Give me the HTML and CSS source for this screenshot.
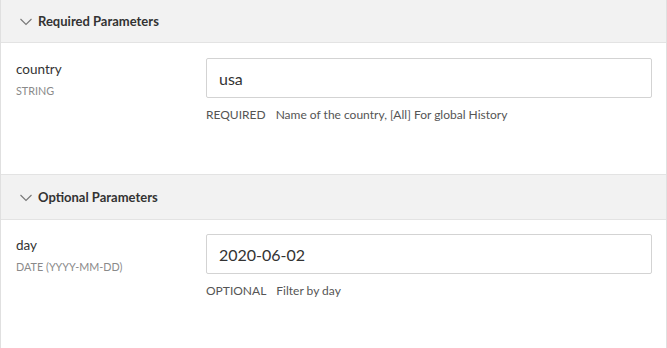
FILE: index.html
```html
<!DOCTYPE html>
<html>
<head>
<meta charset="utf-8">
<link rel="stylesheet" href="styles.css">
</head>
<body>
<div class="panel">
  <div class="section first">
    <div class="section-header">
      <svg class="chev" width="12" height="8" viewBox="0 0 12 8"><path d="M0.5 1 L6 6.5 L11.5 1" fill="none" stroke="#777" stroke-width="1.1"/></svg>
      <span>Required Parameters</span>
    </div>
    <div class="section-body">
      <div class="param">
        <div class="param-label">
          <div class="name">country</div>
          <div class="type">STRING</div>
        </div>
        <div class="param-field">
          <div class="input">usa</div>
          <div class="help"><span class="req">REQUIRED</span>Name of the country, [All] For global History</div>
        </div>
      </div>
    </div>
  </div>
  <div class="section">
    <div class="section-header">
      <svg class="chev" width="12" height="8" viewBox="0 0 12 8"><path d="M0.5 1 L6 6.5 L11.5 1" fill="none" stroke="#777" stroke-width="1.1"/></svg>
      <span>Optional Parameters</span>
    </div>
    <div class="section-body">
      <div class="param">
        <div class="param-label">
          <div class="name">day</div>
          <div class="type">DATE (YYYY-MM-DD)</div>
        </div>
        <div class="param-field">
          <div class="input">2020-06-02</div>
          <div class="help"><span class="req">OPTIONAL</span>Filter by day</div>
        </div>
      </div>
    </div>
  </div>
</div>
</body>
</html>
```
FILE: styles.css
```css
html, body {
  margin: 0;
  padding: 0;
  background: #fff;
}
body {
  font-family: Lato, "Open Sans", sans-serif;
  color: #333;
}
.panel {
  width: 665px;
  border-left: 1px solid #e0e0e0;
  border-right: 1px solid #e0e0e0;
  height: 348px;
  overflow: hidden;
}
.section {
  border-top: 1px solid #e3e3e3;
}
.section.first {
  border-top: none;
}
.section-header {
  height: 42px;
  background: #f2f2f2;
  border-bottom: 1px solid #e3e3e3;
  display: flex;
  align-items: center;
  padding-left: 19px;
  font-size: 13px;
  font-weight: 700;
  color: #333;
}
.section:not(.first) .section-header {
  height: 44px;
}
.chev {
  margin-right: 6px;
  margin-top: 1px;
}
.section-body {
  height: 131px;
  padding: 15px 0 0 15px;
  box-sizing: border-box;
}
.section:not(.first) .section-body {
  height: 140px;
  padding-top: 14px;
}
.param {
  display: flex;
}
.param-label {
  width: 190px;
  padding-top: 3px;
}
.name {
  font-size: 13.5px;
  color: #333;
  line-height: 17px;
}
.type {
  font-size: 10.8px;
  color: #8a8a8a;
  margin-top: 6px;
}
.param-field {
  width: 446px;
}
.input {
  height: 40px;
  box-sizing: border-box;
  border: 1px solid #d3d3d3;
  border-radius: 2px;
  display: flex;
  align-items: center;
  padding-left: 12px;
  font-size: 16px;
  color: #333;
}
.help {
  margin-top: 9px;
  font-size: 12px;
  color: #555;
}
.req {
  margin-right: 10px;
}
```
